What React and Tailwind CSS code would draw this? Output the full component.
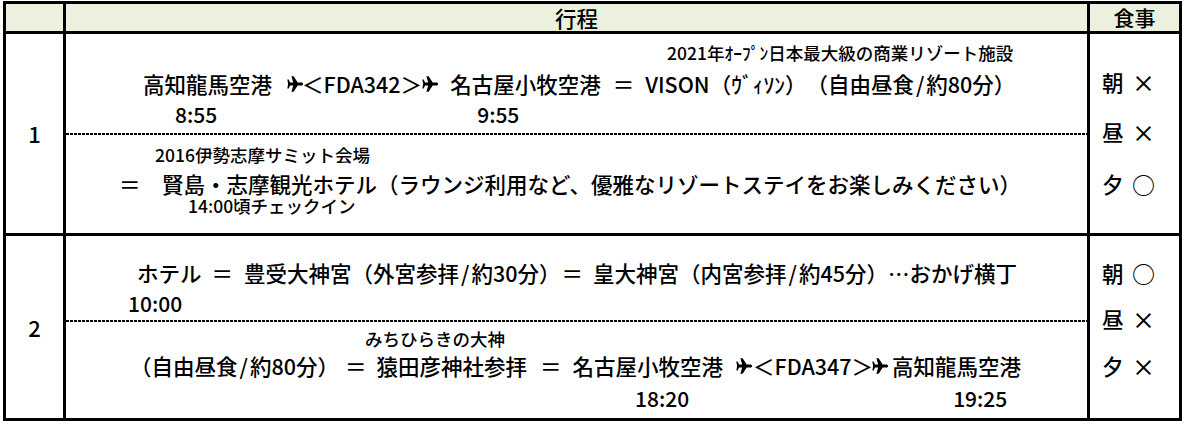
const Plane = ({ className = '' }) => (
  <svg viewBox="0 0 20 20" className={`w-[18px] h-[18px] shrink-0 ${className}`} fill="currentColor">
    <path d="M19 10c0-1.1-1-1.8-2.2-1.8H13L8.5 1.5H6l2 6.7H4.5L3 5H1.5l.8 5-.8 5H3l1.5-3.2H8l-2 6.7h2.5l4.5-6.7h3.8c1.2 0 2.2-.7 2.2-1.8z" />
  </svg>
);

const Dots = () => (
  <div className="h-[2px] shrink-0 bg-[image:repeating-linear-gradient(90deg,#000_0px,#000_3px,transparent_3px,transparent_4px)]" />
);

const Slash = () => <span className="mx-[2px]">/</span>;

const Meal = ({ label, mark, className = '' }) => (
  <div className={`h-[24px] leading-[24px] flex items-center pl-[12px] text-[21.5px] ${className}`}>
    <span>{label}</span>
    <span className="inline-block w-[24px] ml-[8px] text-center text-[23px]">{mark}</span>
  </div>
);

const line = 'h-[24px] leading-[24px] flex items-center whitespace-nowrap text-[21.5px]';
const note = 'h-[18px] leading-[18px] whitespace-nowrap text-[17.5px]';
const time = 'h-[18px] leading-[18px] flex whitespace-nowrap text-[21px]';

export default function App() {
  return (
    <div className="w-[1191px] h-[426px] bg-white text-black font-medium font-['Noto_Sans_CJK_JP',sans-serif]">
      <div className="ml-[3px] mt-[1px] w-[1179px] border-[3px] border-black grid grid-cols-[57px_1024px_92px] grid-rows-[27px_202px_185px]">
        {/* header */}
        <div className="bg-[#ebf1de]" />
        <div className="bg-[#ebf1de] border-l-[3px] border-black flex items-center justify-center text-[21.5px] leading-none">行程</div>
        <div className="bg-[#ebf1de] border-l-[3px] border-black flex items-center justify-center text-[21px] leading-none">食事</div>

        {/* day 1 */}
        <div className="border-t-[3px] border-black flex items-center justify-center text-[22px]">1</div>
        <div className="border-t-[3px] border-l-[3px] border-black flex flex-col">
          <div className="h-[99px] flex flex-col">
            <div className={`${note} mt-[10px] pl-[601px]`}>2021年ｵｰﾌﾟﾝ日本最大級の商業リゾート施設</div>
            <div className={`${line} mt-[10px] pl-[77px]`}>
              <span>高知龍馬空港</span>
              <Plane className="ml-[14px]" />
              <span className="ml-[-2px]">＜FDA342＞</span>
              <Plane className="ml-[-1px]" />
              <span className="ml-[11px]">名古屋小牧空港</span>
              <span className="ml-[12px]">＝</span>
              <span className="ml-[11px]">VISON（ｳﾞｨｿﾝ）</span>
              <span>（自由昼食<Slash />約80分）</span>
            </div>
            <div className={`${time} mt-[9px] pl-[109px]`}>
              <span>8:55</span>
              <span className="ml-[260px]">9:55</span>
            </div>
          </div>
          <Dots />
          <div className="flex-1 flex flex-col">
            <div className={`${note} mt-[11px] pl-[89px]`}>2016伊勢志摩サミット会場</div>
            <div className={`${line} mt-[8px] pl-[53px]`}>＝　賢島・志摩観光ホテル（ラウンジ利用など、優雅なリゾートステイをお楽しみください）</div>
            <div className={`${note} mt-[1px] pl-[122px]`}>14:00頃チェックイン</div>
          </div>
        </div>
        <div className="border-t-[3px] border-l-[3px] border-black flex flex-col">
          <Meal label="朝" mark="×" className="mt-[36px]" />
          <Meal label="昼" mark="×" className="mt-[26px]" />
          <Meal label="夕" mark="○" className="mt-[28px]" />
        </div>

        {/* day 2 */}
        <div className="border-t-[3px] border-black flex items-center justify-center text-[22px]">2</div>
        <div className="border-t-[3px] border-l-[3px] border-black flex flex-col">
          <div className="h-[84px] flex flex-col">
            <div className={`${line} mt-[25px] pl-[71px]`}>
              <span>ホテル</span>
              <span className="ml-[10px]">＝</span>
              <span className="ml-[11px]">豊受大神宮（外宮参拝<Slash />約30分）</span>
              <span className="ml-[1px]">＝</span>
              <span className="ml-[10px]">皇大神宮（内宮参拝<Slash />約45分）…おかげ横丁</span>
            </div>
            <div className={`${time} mt-[9px] pl-[62px]`}>10:00</div>
          </div>
          <Dots />
          <div className="flex-1 flex flex-col">
            <div className={`${note} mt-[8px] pl-[299px]`}>みちひらきの大神</div>
            <div className={`${line} mt-[6px] pl-[64px]`}>
              <span>（自由昼食<Slash />約80分）</span>
              <span className="ml-[6px]">＝</span>
              <span className="ml-[10px]">猿田彦神社参拝</span>
              <span className="ml-[13px]">＝</span>
              <span className="ml-[11px]">名古屋小牧空港</span>
              <Plane className="ml-[12px]" />
              <span className="ml-[0px]">＜FDA347＞</span>
              <Plane className="ml-[-2px]" />
              <span className="ml-[3px]">高知龍馬空港</span>
            </div>
            <div className={`${time} mt-[11px] pl-[569px]`}>
              <span>18:20</span>
              <span className="ml-[264px]">19:25</span>
            </div>
          </div>
        </div>
        <div className="border-t-[3px] border-l-[3px] border-black flex flex-col">
          <Meal label="朝" mark="○" className="mt-[25px]" />
          <Meal label="昼" mark="×" className="mt-[22px]" />
          <Meal label="夕" mark="×" className="mt-[23px]" />
        </div>
      </div>
    </div>
  );
}
